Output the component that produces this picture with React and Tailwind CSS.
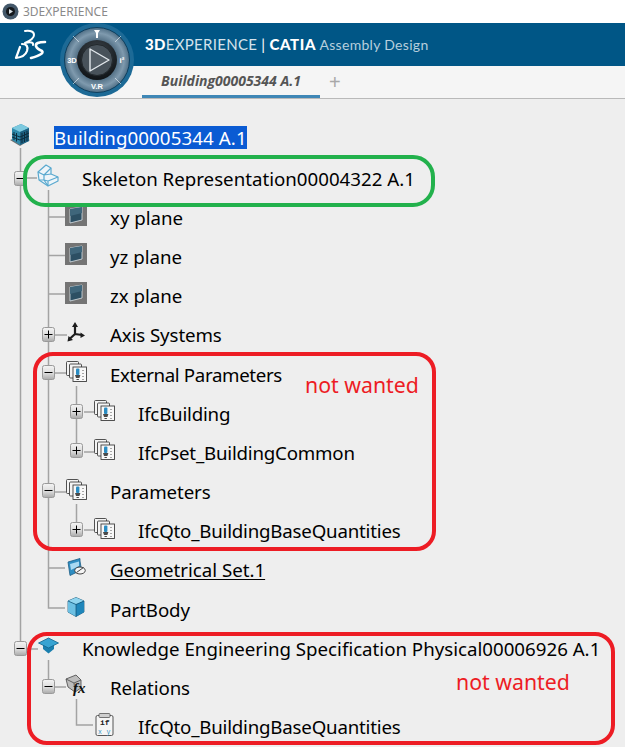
import React from "react";

const FONT = "font-['Noto_Sans','Liberation_Sans',sans-serif]";

function Expander({ kind }) {
  return (
    <svg width="13" height="15" viewBox="0 0 13 15" className="block">
      <defs>
        <linearGradient id="expg" x1="0" y1="0" x2="0" y2="1">
          <stop offset="0%" stopColor="#f4f4f4" />
          <stop offset="55%" stopColor="#dcdcdc" />
          <stop offset="100%" stopColor="#a9a9a9" />
        </linearGradient>
      </defs>
      <rect x="0.500" y="0.500" width="12" height="14" rx="2" fill="url(#expg)" stroke="#9a9a9a" />
      <path d="M2.500 7.500 H10.500" stroke="#000" strokeWidth="1" />
      {kind === "plus" && <path d="M6.500 3.500 V11.500" stroke="#000" strokeWidth="1" />}
    </svg>
  );
}

const BuildingIcon = () => (
  <svg width="22" height="24" viewBox="0 0 22 24">
    <path d="M1 17 L11 23 L21 17 L11 13 Z" fill="#6f6f6f" />
    <path d="M3 5 L12 1 L20 5 L20 18 L11 22 L3 17 Z" fill="#2f89aa" />
    <path d="M3 5 L12 1 L20 5 L11 9 Z" fill="#7cc9df" />
    <path d="M11 9 L20 5 L20 18 L11 22 Z" fill="#1d5f80" />
    <path d="M5 9v8M7.500 10v8.500M13 10v10M15.500 9v10M18 8v10M3 11l8 3 9-4M3 14l8 3 9-4" stroke="#0d2c3d" strokeWidth="1" fill="none" />
  </svg>
);

const SkeletonIcon = () => (
  <svg width="22" height="23" viewBox="0 0 22 23" fill="none" stroke="#5aa9cf" strokeWidth="1.200" strokeLinejoin="round">
    <path d="M1 8 L9 1 L14 4 L14 10 L21 13 L21 17 L11 22 L2 16 Z" fill="#eef5f9" />
    <path d="M1 8 L7 11 L14 4 M7 11 L7 16 L2 16 M7 16 L11 22 M11 17 L11 22 M7 11 L14 10 M7 16 L11 17 L21 13" />
  </svg>
);

const PlaneIcon = () => (
  <svg width="22" height="22" viewBox="0 0 22 22">
    <rect width="22" height="22" fill="#747474" />
    <path d="M5 5 L17 3 L17 16 L5 19 Z" fill="#2c4f63" stroke="#dbe2e6" strokeWidth="0.8" />
    <path d="M5 5 L17 3 L17 9 L5 12 Z" fill="#3f667b" />
  </svg>
);

const AxisIcon = () => (
  <svg width="18" height="20" viewBox="0 0 18 20" fill="#1c1c1c" stroke="#1c1c1c">
    <path d="M8 12 V4 M8 12 L15 13 M8 12 L2.500 17" strokeWidth="2.200" fill="none" />
    <path d="M8 0 L5 5 H11 Z M18 13.500 L13.500 10.500 V16 Z M0.500 19.500 L1.500 14 L6 18 Z" strokeWidth="0" />
  </svg>
);

const Sheet = ({ x, y }) => (
  <rect x={x} y={y} width="12" height="14" rx="1" fill="#f4f4f4" stroke="#3e3e3e" strokeWidth="0.9" />
);
const ParamsIcon = () => (
  <svg width="21" height="21" viewBox="0 0 21 21">
    <Sheet x={0.500} y={0.500} />
    <Sheet x={3.500} y={3} />
    <rect x="7" y="6" width="13.500" height="14.500" fill="#f8f8f8" stroke="#3e3e3e" strokeWidth="0.9" />
    <rect x="10" y="7.500" width="3.400" height="6.500" rx="1" fill="#2a8cc2" />
    <path d="M9 14 h5.400 l-1 3 h-3.400 Z" fill="#4a4a4a" />
    <path d="M10.500 18.500 h2.400" stroke="#4a4a4a" />
    <path d="M17 9v1M17 12v1M17 15v1M17 18v1" stroke="#555" />
  </svg>
);

const GeoSetIcon = () => (
  <svg width="19" height="19" viewBox="0 0 19 19">
    <path d="M1 4 L13 0.500 L13 3 L14.500 12 L3 17.500 Z" fill="#2f8ec2" stroke="#1d5e86" strokeWidth="0.8" />
    <path d="M3 6 L12 3.500 L12 8 L4 12 Z" fill="#a9daf2" />
    <ellipse cx="13" cy="12.500" rx="5.300" ry="3.500" fill="#f5f5f5" stroke="#444" />
    <path d="M9.500 14.500 L16.500 9.500" stroke="#444" />
  </svg>
);

const CubeIcon = () => (
  <svg width="18" height="20" viewBox="0 0 18 20">
    <path d="M9 0.500 L17 4 L17 15 L9 19.500 L1 15 L1 4 Z" fill="#1f83b6" stroke="#0f4d70" strokeWidth="0.7" />
    <path d="M9 0.500 L17 4 L9 7.500 L1 4 Z" fill="#8fd4ee" />
    <path d="M9 7.500 L17 4 L17 15 L9 19.500 Z" fill="#1f86ba" />
    <path d="M9 7.500 L1 4 L1 15 L9 19.500 Z" fill="#6cc0e3" />
    <path d="M1 4 L9 7.500 L17 4 M9 7.500 V19.500" stroke="#0f4d70" strokeWidth="0.7" fill="none" />
  </svg>
);

const CapIcon = () => (
  <svg width="21" height="17" viewBox="0 0 21 17">
    <path d="M5 7 V12 L10.500 16.500 L16 12 V7 Z" fill="#1a7fae" />
    <path d="M0.500 6 L10.500 1 L20.500 6 L10.500 11 Z" fill="#37a3d2" stroke="#13658e" strokeWidth="0.8" />
  </svg>
);

const RelationsIcon = () => (
  <svg width="22" height="23" viewBox="0 0 22 23">
    <path d="M1 5 L11 1 L16 6 L16 14 L10 18 L3 13 Z" fill="#bdbdbd" stroke="#555" strokeWidth="0.9" />
    <path d="M1 5 L9 9 L16 6 M9 9 L10 18" stroke="#555" strokeWidth="0.9" fill="none" />
    <text x="8" y="19" fontFamily="'Liberation Serif',serif" fontStyle="italic" fontWeight="700" fontSize="15" fill="#111">fx</text>
  </svg>
);

const FormulaIcon = () => (
  <svg width="19" height="23" viewBox="0 0 19 23">
    <rect x="1" y="2.500" width="17" height="20" rx="1.500" fill="#f5f5f5" stroke="#555" />
    <rect x="4" y="0.500" width="11" height="4" rx="1" fill="#cfcfcf" stroke="#555" strokeWidth="0.8" />
    <text x="5" y="12" fontFamily="'Liberation Mono',monospace" fontSize="8" fontWeight="700" fill="#222">if</text>
    <text x="3" y="21" fontFamily="'Liberation Mono',monospace" fontSize="6.500" fill="#2f8fc0">x</text>
    <text x="11.500" y="21" fontFamily="'Liberation Mono',monospace" fontSize="6.500" fill="#2f8fc0">y</text>
  </svg>
);

const rows = [
  { level: 0, icon: <BuildingIcon />, text: "Building00005344 A.1", selected: true, h: "h-[41.500px]", t: "tracking-[0.1px]" },
  { level: 1, exp: "minus", expUp: "pb-0", icon: <SkeletonIcon />, text: "Skeleton Representation00004322 A.1" },
  { level: 2, icon: <PlaneIcon />, text: "xy plane" },
  { level: 2, icon: <PlaneIcon />, text: "yz plane" },
  { level: 2, icon: <PlaneIcon />, text: "zx plane" },
  { level: 2, exp: "plus", expUp: "pb-0", icon: <AxisIcon />, text: "Axis Systems", t: "tracking-[-0.1px]" },
  { level: 2, exp: "minus", icon: <ParamsIcon />, text: "External Parameters", t: "tracking-[-0.35px]" },
  { level: 3, exp: "plus", icon: <ParamsIcon />, text: "IfcBuilding", t: "tracking-[-0.2px]" },
  { level: 3, exp: "plus", icon: <ParamsIcon />, text: "IfcPset_BuildingCommon", t: "tracking-[-0.2px]" },
  { level: 2, exp: "minus", icon: <ParamsIcon />, text: "Parameters", t: "tracking-[-0.1px]" },
  { level: 3, exp: "plus", icon: <ParamsIcon />, text: "IfcQto_BuildingBaseQuantities", t: "tracking-[-0.2px]" },
  { level: 2, icon: <GeoSetIcon />, text: "Geometrical Set.1" , underline: true },
  { level: 2, icon: <CubeIcon />, text: "PartBody", t: "tracking-[-0.1px]" },
  { level: 1, exp: "minus", expUp: "pb-0", icon: <CapIcon />, text: "Knowledge Engineering Specification Physical00006926 A.1" },
  { level: 2, exp: "minus", icon: <RelationsIcon />, text: "Relations", t: "tracking-[-0.1px]" },
  { level: 3, icon: <FormulaIcon />, text: "IfcQto_BuildingBaseQuantities", t: "tracking-[-0.2px]" },
];

const indent = { 0: "pl-0", 1: "pl-0", 2: "pl-[28px]", 3: "pl-[56px]" };

function Row({ r }) {
  return (
    <div className={`flex items-center ${r.h || "h-[39.200px]"} ${indent[r.level]}`}>
      {r.level > 0 && (
        <span className={`w-[28px] flex justify-center shrink-0 ${r.expUp || "pb-[3px]"}`}>{r.exp && <Expander kind={r.exp} />}</span>
      )}
      <span className="w-[28px] flex justify-center shrink-0 pb-[5px]">{r.icon}</span>
      <span
        className={`ml-[20px] whitespace-nowrap text-[18.700px] leading-[23px] ${r.t || ""} ${
          r.selected ? "bg-[#0a5bd3] text-white" : "text-black"
        } ${r.underline ? "underline underline-offset-2" : ""}`}
      >
        {r.text}
      </span>
    </div>
  );
}

function Compass() {
  return (
    <svg width="76" height="76" viewBox="0 0 76 76">
      <defs>
        <radialGradient id="ring" cx="50%" cy="50%" r="55%">
          <stop offset="45%" stopColor="#3c5a70" />
          <stop offset="75%" stopColor="#7f9aae" />
          <stop offset="100%" stopColor="#34566e" />
        </radialGradient>
        <radialGradient id="core" cx="50%" cy="30%" r="70%">
          <stop offset="0%" stopColor="#3c444b" />
          <stop offset="100%" stopColor="#101417" />
        </radialGradient>
      </defs>
      <circle cx="38" cy="38" r="37" fill="#1d6a96" />
      <circle cx="38" cy="38" r="32.500" fill="url(#ring)" stroke="#0e3f5e" />
      <path d="M14 14 L20 20 M62 14 L56 20 M14 62 L20 56 M62 62 L56 56" stroke="#dfe8ee" strokeWidth="0.7" />
      <circle cx="38" cy="38" r="20" fill="url(#core)" />
      <circle cx="38" cy="38" r="15.500" fill="#48525a" stroke="#22282c" />
      <path d="M31 27 L50 38 L31 49 Z" fill="#566068" stroke="#e3e8ec" strokeWidth="1.400" strokeLinejoin="round" />
      <text x="13" y="41" textAnchor="middle" fontSize="7.500" fontWeight="700" fill="#fff" fontFamily="'Liberation Sans',sans-serif">3D</text>
      <text x="38" y="67" textAnchor="middle" fontSize="7.500" fontWeight="700" fill="#fff" fontFamily="'Liberation Sans',sans-serif">V.R</text>
      <text x="63" y="41" textAnchor="middle" fontSize="8" fontWeight="700" fill="#fff" fontFamily="'Liberation Sans',sans-serif">i²</text>
      <path d="M35 8 h6 l-2 3 v5 h-2 v-5 Z" fill="#fff" />
    </svg>
  );
}

function TreeLines() {
  const d = [
    "M20.500 148 V642",
    "M27 178 H37",
    "M48.500 190 V608 H65",
    "M48 217 H65 M48 255.500 H65 M48 294 H65 M48 568 H65",
    "M55 335 H67 M55 373 H66 M55 492 H66",
    "M76.500 386 V445 M84 412 H94 M84 452 H94",
    "M76.500 504 V524 M84 530 H94",
    "M27 649 H38",
    "M48.500 660 V680 M55 687 H66",
    "M76.500 699 V725 H93",
  ].join(" ");
  return (
    <svg className="absolute left-0 top-0 pointer-events-none" width="110" height="747" viewBox="0 0 110 747">
      <path d={d} fill="none" stroke="#a3a3a3" strokeWidth="1.500" />
    </svg>
  );
}

export default function App() {
  return (
    <div className={`relative w-[625px] h-[747px] overflow-hidden bg-[#eeeeee] ${FONT}`}>
      <TreeLines />

      {/* title bar */}
      <div className="relative h-[23px] bg-white flex items-center pl-[2px] gap-[4px]">
        <svg width="17" height="17" viewBox="0 0 17 17">
          <circle cx="8.500" cy="8.500" r="8" fill="#44586a" />
          <circle cx="8.500" cy="8.500" r="4.500" fill="#14181c" />
          <path d="M7 6 L11 8.500 L7 11 Z" fill="#d6dde2" />
        </svg>
        <span className="text-[12px] text-[#8a8a8a]">3DEXPERIENCE</span>
      </div>

      {/* blue header */}
      <div className="relative h-[43px] bg-[#005686] flex items-center pl-[145px]">
        <svg className="absolute left-[14px] top-[6px]" width="34" height="32" viewBox="0 0 34 32" fill="none" stroke="#fff" strokeLinecap="round" strokeLinejoin="round">
          <path d="M11 2 Q20 1 20 6 Q20 10 11 14 Q20 12 19 16" strokeWidth="2" />
          <path d="M8 15 Q15 15 13 22 Q11 28 2 29 L6 18" strokeWidth="2.200" />
          <path d="M31 13 Q21 13 22 17 Q23 20 28 22 Q31 25 17 29" strokeWidth="2.600" />
        </svg>
        <span className="whitespace-nowrap text-[15px] tracking-[0.3px] text-[#d5e3ec] font-['Lato',sans-serif]">
          <span className="font-black text-white">3D</span>
          <span>EXPERIENCE</span>
          <span className="text-white"> | </span>
          <span className="font-black text-white tracking-[0.6px]">CATIA</span>
          <span className="text-[#b7cfdd] text-[14px]"> Assembly Design</span>
        </span>
      </div>

      {/* tab bar */}
      <div className="relative h-[33px] bg-[#f5f5f5] border-b border-[#b9b9b9] flex items-stretch pl-[142px]">
        <div className="w-[178px] border-b-[3px] border-[#3f87b6] flex justify-center items-center">
          <span className="text-[14px] font-bold italic text-[#555555] whitespace-nowrap font-['Open_Sans',sans-serif]">Building00005344 A.1</span>
        </div>
        <span className="ml-[9px] self-center text-[#a8a8a8] text-[20px] leading-none font-['Liberation_Sans',sans-serif]">+</span>
      </div>

      {/* tree */}
      <div className="relative pt-[18px] pl-[6px]">
        {rows.map((r, i) => (
          <Row key={i} r={r} />
        ))}
      </div>

      {/* annotations */}
      <div className="absolute left-[59px] top-[22px]">
        <Compass />
      </div>
      <div className="absolute left-[23px] top-[155px] w-[412px] h-[52px] rounded-[22px] border-[4px] border-[#22b14c]" />
      <div className="absolute left-[33px] top-[352px] w-[403px] h-[199px] rounded-[20px] border-[4px] border-[#ed1c24]" />
      <div className="absolute left-[27px] top-[632px] w-[588px] h-[113px] rounded-[20px] border-[4px] border-[#ed1c24]" />
      <span className="absolute left-[305px] top-[371px] text-[21.300px] leading-[28px] text-[#ed1c24] whitespace-nowrap">not wanted</span>
      <span className="absolute left-[456px] top-[668px] text-[21.300px] leading-[28px] text-[#ed1c24] whitespace-nowrap">not wanted</span>
    </div>
  );
}
